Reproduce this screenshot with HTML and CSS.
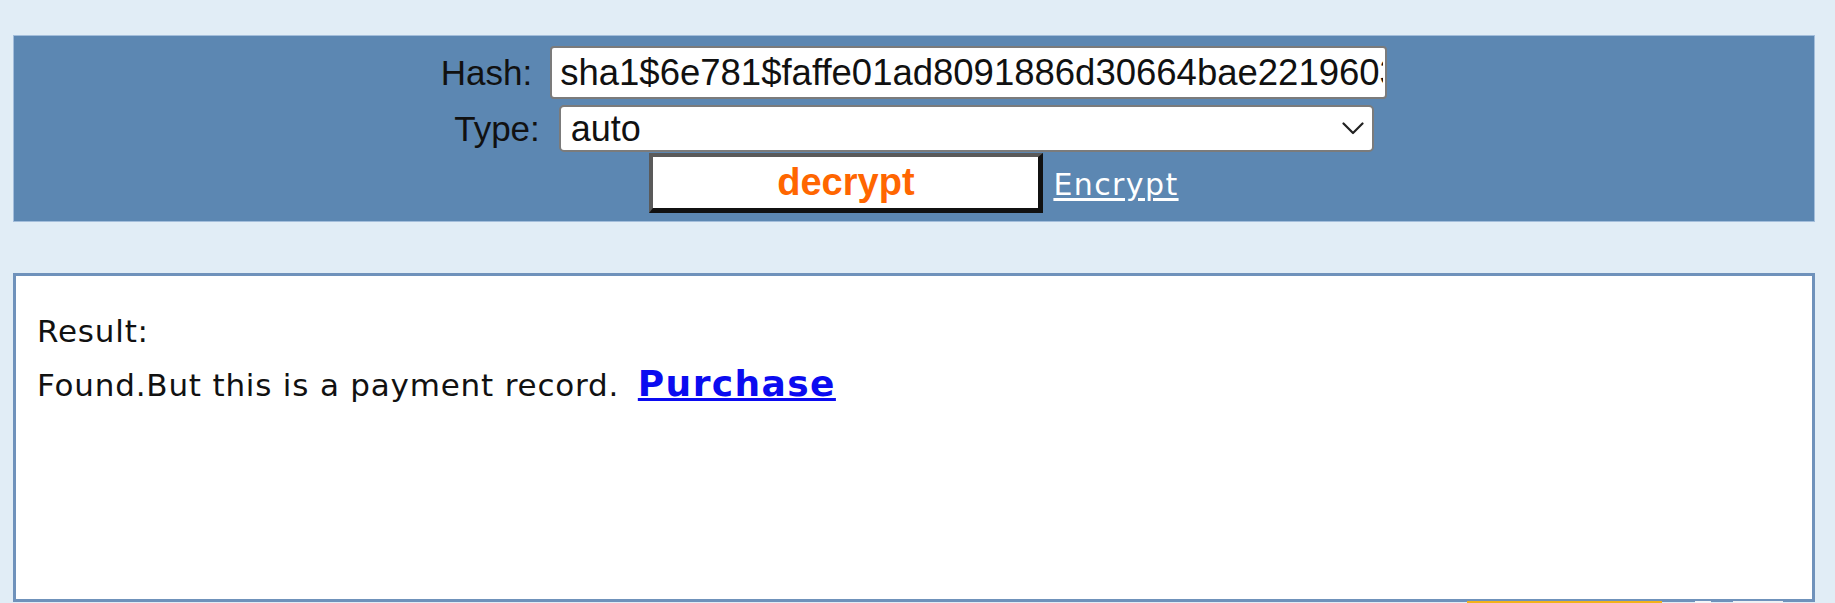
FILE: index.html
```html
<!DOCTYPE html>
<html lang="en">
<head>
<meta charset="utf-8">
<title>Hash decrypt</title>
<link rel="stylesheet" href="styles.css">
</head>
<body>
<div class="page">
  <form class="bar">
    <div class="row">
      <label class="lbl" for="hash">Hash:</label>
      <input class="hash" id="hash" type="text" value="sha1$6e781$faffe01ad8091886d30664bae22196034">
    </div>
    <div class="row row-type">
      <label class="lbl" for="type">Type:</label>
      <div class="select-wrap">
        <select id="type" class="type"><option>auto</option></select>
        <svg class="chev" viewBox="0 0 22 13" aria-hidden="true"><path d="M1.5 1.5 L11 11 L20.5 1.5" fill="none" stroke="#222" stroke-width="2.2" stroke-linecap="round" stroke-linejoin="round"/></svg>
      </div>
    </div>
    <div class="row row-btn">
      <button type="button" class="decrypt">decrypt</button>
      <a class="encrypt" href="#">Encrypt</a>
    </div>
  </form>
  <div class="result">
    <p>Result:</p>
    <p>Found.But this is a payment record. <a class="buy" href="#">Purchase</a></p>
  </div>
</div>
<div class="dock"><span class="dock-orange"></span><span class="dock-w1"></span><span class="dock-w2"></span></div>
</body>
</html>
```

FILE: styles.css
```css
html, body {
  margin: 0;
  padding: 0;
}
html {
  background: #e1edf6;
  overflow: hidden;
}
body {
  font-family: "DejaVu Sans", Verdana, sans-serif;
  color: #111;
  height: 603px;
  position: relative;
}
.page {
  padding: 35px 20px 0 13px;
  display: flex;
  flex-direction: column;
  gap: 51px;
}
.bar {
  margin: 0;
  background: #5c87b2;
  border: 1px solid #a3bedb;
  height: 187px;
  box-sizing: border-box;
  padding-top: 10px;
  display: flex;
  flex-direction: column;
  align-items: center;
}
.row {
  display: flex;
  align-items: center;
  gap: 18px;
}
.lbl {
  font: 35px "Liberation Sans", Arial, sans-serif;
  color: #111;
}
.hash {
  width: 837px;
  height: 53px;
  box-sizing: border-box;
  border: 2px solid #7b7b7b;
  border-radius: 4px;
  padding: 0 2px 0 8px;
  margin: 0;
  font: 36.5px "Liberation Sans", Arial, sans-serif;
  color: #111;
  background: #fff;
  outline: none;
}
.row-type {
  margin-top: 6px;
  gap: 19px;
}
.select-wrap {
  position: relative;
  display: flex;
}
.type {
  appearance: none;
  -webkit-appearance: none;
  width: 815px;
  height: 47px;
  box-sizing: border-box;
  border: 2px solid #7b7b7b;
  border-radius: 5px;
  padding: 0 40px 0 10px;
  margin: 0;
  font: 36px "Liberation Sans", Arial, sans-serif;
  background: #fff;
  color: #111;
}
.chev {
  position: absolute;
  right: 10px;
  top: 17px;
  width: 22px;
  height: 13px;
}
.row-btn {
  margin-top: 1px;
  align-items: baseline;
  gap: 10px;
}
.decrypt {
  width: 394px;
  height: 60px;
  box-sizing: border-box;
  border-style: solid;
  border-width: 4px 5px 5px 4px;
  border-color: #5a5a5a #111 #111 #5a5a5a;
  background: #fff;
  font: bold 38px "Liberation Sans", Arial, sans-serif;
  color: #ff6600;
  padding: 0;
  margin: 0;
}
.encrypt {
  font: 30px "DejaVu Sans", Verdana, sans-serif;
  letter-spacing: 1.4px;
  color: #fff;
  text-decoration: underline;
  text-underline-offset: 3px;
}
.result {
  background: #fff;
  border: 3px solid #6f92bb;
  height: 329px;
  box-sizing: border-box;
  padding: 28px 21px;
  font-size: 31px;
  letter-spacing: 0.8px;
  line-height: 54px;
  color: #111;
}
.result p {
  margin: 0;
}
.buy {
  margin-left: 8px;
  font-weight: bold;
  font-size: 36px;
  letter-spacing: 1.4px;
  color: #0b0bf0;
  line-height: 1;
  text-decoration-thickness: 3px;
}
.dock {
  position: absolute;
  top: 601px;
  left: 1467px;
  display: flex;
  height: 10px;
}
.dock-orange {
  width: 195px;
  height: 10px;
  background: #f3b21b;
}
.dock-w1 {
  width: 16px;
  height: 10px;
  margin-left: 33px;
  background: #f4f6f8;
}
.dock-w2 {
  width: 50px;
  height: 10px;
  margin-left: 22px;
  background: #eef1f4;
}
```
